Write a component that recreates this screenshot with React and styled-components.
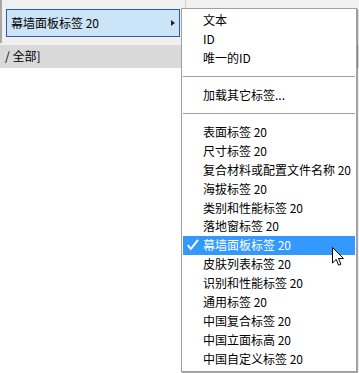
import React from 'react';
import styled, { createGlobalStyle } from 'styled-components';

const GlobalStyle = createGlobalStyle`
  html, body {
    margin: 0;
    padding: 0;
    background: #ffffff;
  }
  body {
    font-family: 'Noto Sans CJK SC', 'Noto Sans', sans-serif;
    font-size: 12px;
    color: #000;
  }
`;

const ITEMS = [
  { id: 0, label: '文本' },
  { id: 1, label: 'ID' },
  { id: 2, label: '唯一的ID' },
  { id: 3, sep: true },
  { id: 4, label: '加载其它标签...' },
  { id: 5, sep: true },
  { id: 6, label: '表面标签 20' },
  { id: 7, label: '尺寸标签 20' },
  { id: 8, label: '复合材料或配置文件名称 20' },
  { id: 9, label: '海拔标签 20' },
  { id: 10, label: '类别和性能标签 20' },
  { id: 11, label: '落地窗标签 20' },
  { id: 12, label: '幕墙面板标签 20', checked: true },
  { id: 13, label: '皮肤列表标签 20' },
  { id: 14, label: '识别和性能标签 20' },
  { id: 15, label: '通用标签 20' },
  { id: 16, label: '中国复合标签 20' },
  { id: 17, label: '中国立面标高 20' },
  { id: 18, label: '中国自定义标签 20' },
];

export default function App() {
  return (
    <>
      <GlobalStyle />
      <Page>
        <Toolbar>
          <EdgeLine />
          <Trigger>
            <span>幕墙面板标签 20</span>
            <Arrow />
          </Trigger>
          <ColumnLine />
        </Toolbar>
        <PathBar>/ 全部]</PathBar>

        <Menu>
          {ITEMS.map((i) =>
            i.sep ? (
              <Separator key={i.id} />
            ) : (
              <Item key={i.id} $active={i.checked}>
                {i.checked && (
                  <Check width="12" height="12" viewBox="0 0 12 12">
                    <polyline points="0.8,6.2 3.8,10 11,0.8" fill="none" stroke="#fff" strokeWidth="2" />
                  </Check>
                )}
                {i.label}
              </Item>
            )
          )}
        </Menu>

        <Cursor width="13" height="20" viewBox="0 0 13 20">
          <path
            d="M0.5 0.5 L0.5 16 L4.2 12.4 L6.6 18.2 L8.9 17.2 L6.5 11.5 L11.5 11.5 Z"
            fill="#fff"
            stroke="#000"
            strokeWidth="1"
            strokeLinejoin="miter"
          />
        </Cursor>
      </Page>
    </>
  );
}

const Page = styled.div`
  position: relative;
  width: 359px;
  height: 373px;
  overflow: hidden;
  background: #ffffff;
`;

const Toolbar = styled.div`
  position: relative;
  display: flex;
  align-items: flex-start;
  height: 45px;
  padding: 9px 0 0 6px;
  box-sizing: border-box;
  background: #f0f0f0;
`;

const EdgeLine = styled.div`
  position: absolute;
  left: 0;
  top: 0;
  width: 2px;
  height: 43px;
  background: #a8a8a8;
`;

const ColumnLine = styled.div`
  position: absolute;
  left: 185px;
  top: 0;
  width: 1px;
  height: 9px;
  background: #d0d0d0;
`;

const Trigger = styled.div`
  display: flex;
  align-items: center;
  justify-content: space-between;
  width: 174px;
  height: 28px;
  box-sizing: border-box;
  padding: 0 4px 1px 4px;
  background: #cce4f7;
  border: 1px solid #2a5e9c;
`;

const Arrow = styled.span`
  width: 0;
  height: 0;
  border-top: 3.5px solid transparent;
  border-bottom: 3.5px solid transparent;
  border-left: 4px solid #222;
  margin-top: 1px;
`;

const PathBar = styled.div`
  height: 23px;
  line-height: 22px;
  background: #d9d9d9;
  padding-left: 5px;
  white-space: nowrap;
`;

const Menu = styled.div`
  position: absolute;
  left: 181px;
  top: 8px;
  width: 176px;
  height: 364px;
  box-sizing: border-box;
  padding: 2px 1px;
  background: #fff;
  border: 1px solid #a0a0a0;
  box-shadow: 1px 1px 1px rgba(0, 0, 0, 0.35);
  display: flex;
  flex-direction: column;
`;

const Item = styled.div`
  position: relative;
  height: 19px;
  line-height: 18px;
  padding-left: 20px;
  white-space: nowrap;
  background: ${(p) => (p.$active ? '#3399ff' : 'transparent')};
  color: ${(p) => (p.$active ? '#fff' : '#000')};
`;

const Check = styled.svg`
  position: absolute;
  left: 4px;
  top: 3px;
`;

const Separator = styled.div`
  height: 18px;
  display: flex;
  align-items: center;

  &::after {
    content: '';
    flex: 1;
    height: 1px;
    background: #a0a0a0;
  }
`;

const Cursor = styled.svg`
  position: absolute;
  left: 332px;
  top: 247px;
`;
